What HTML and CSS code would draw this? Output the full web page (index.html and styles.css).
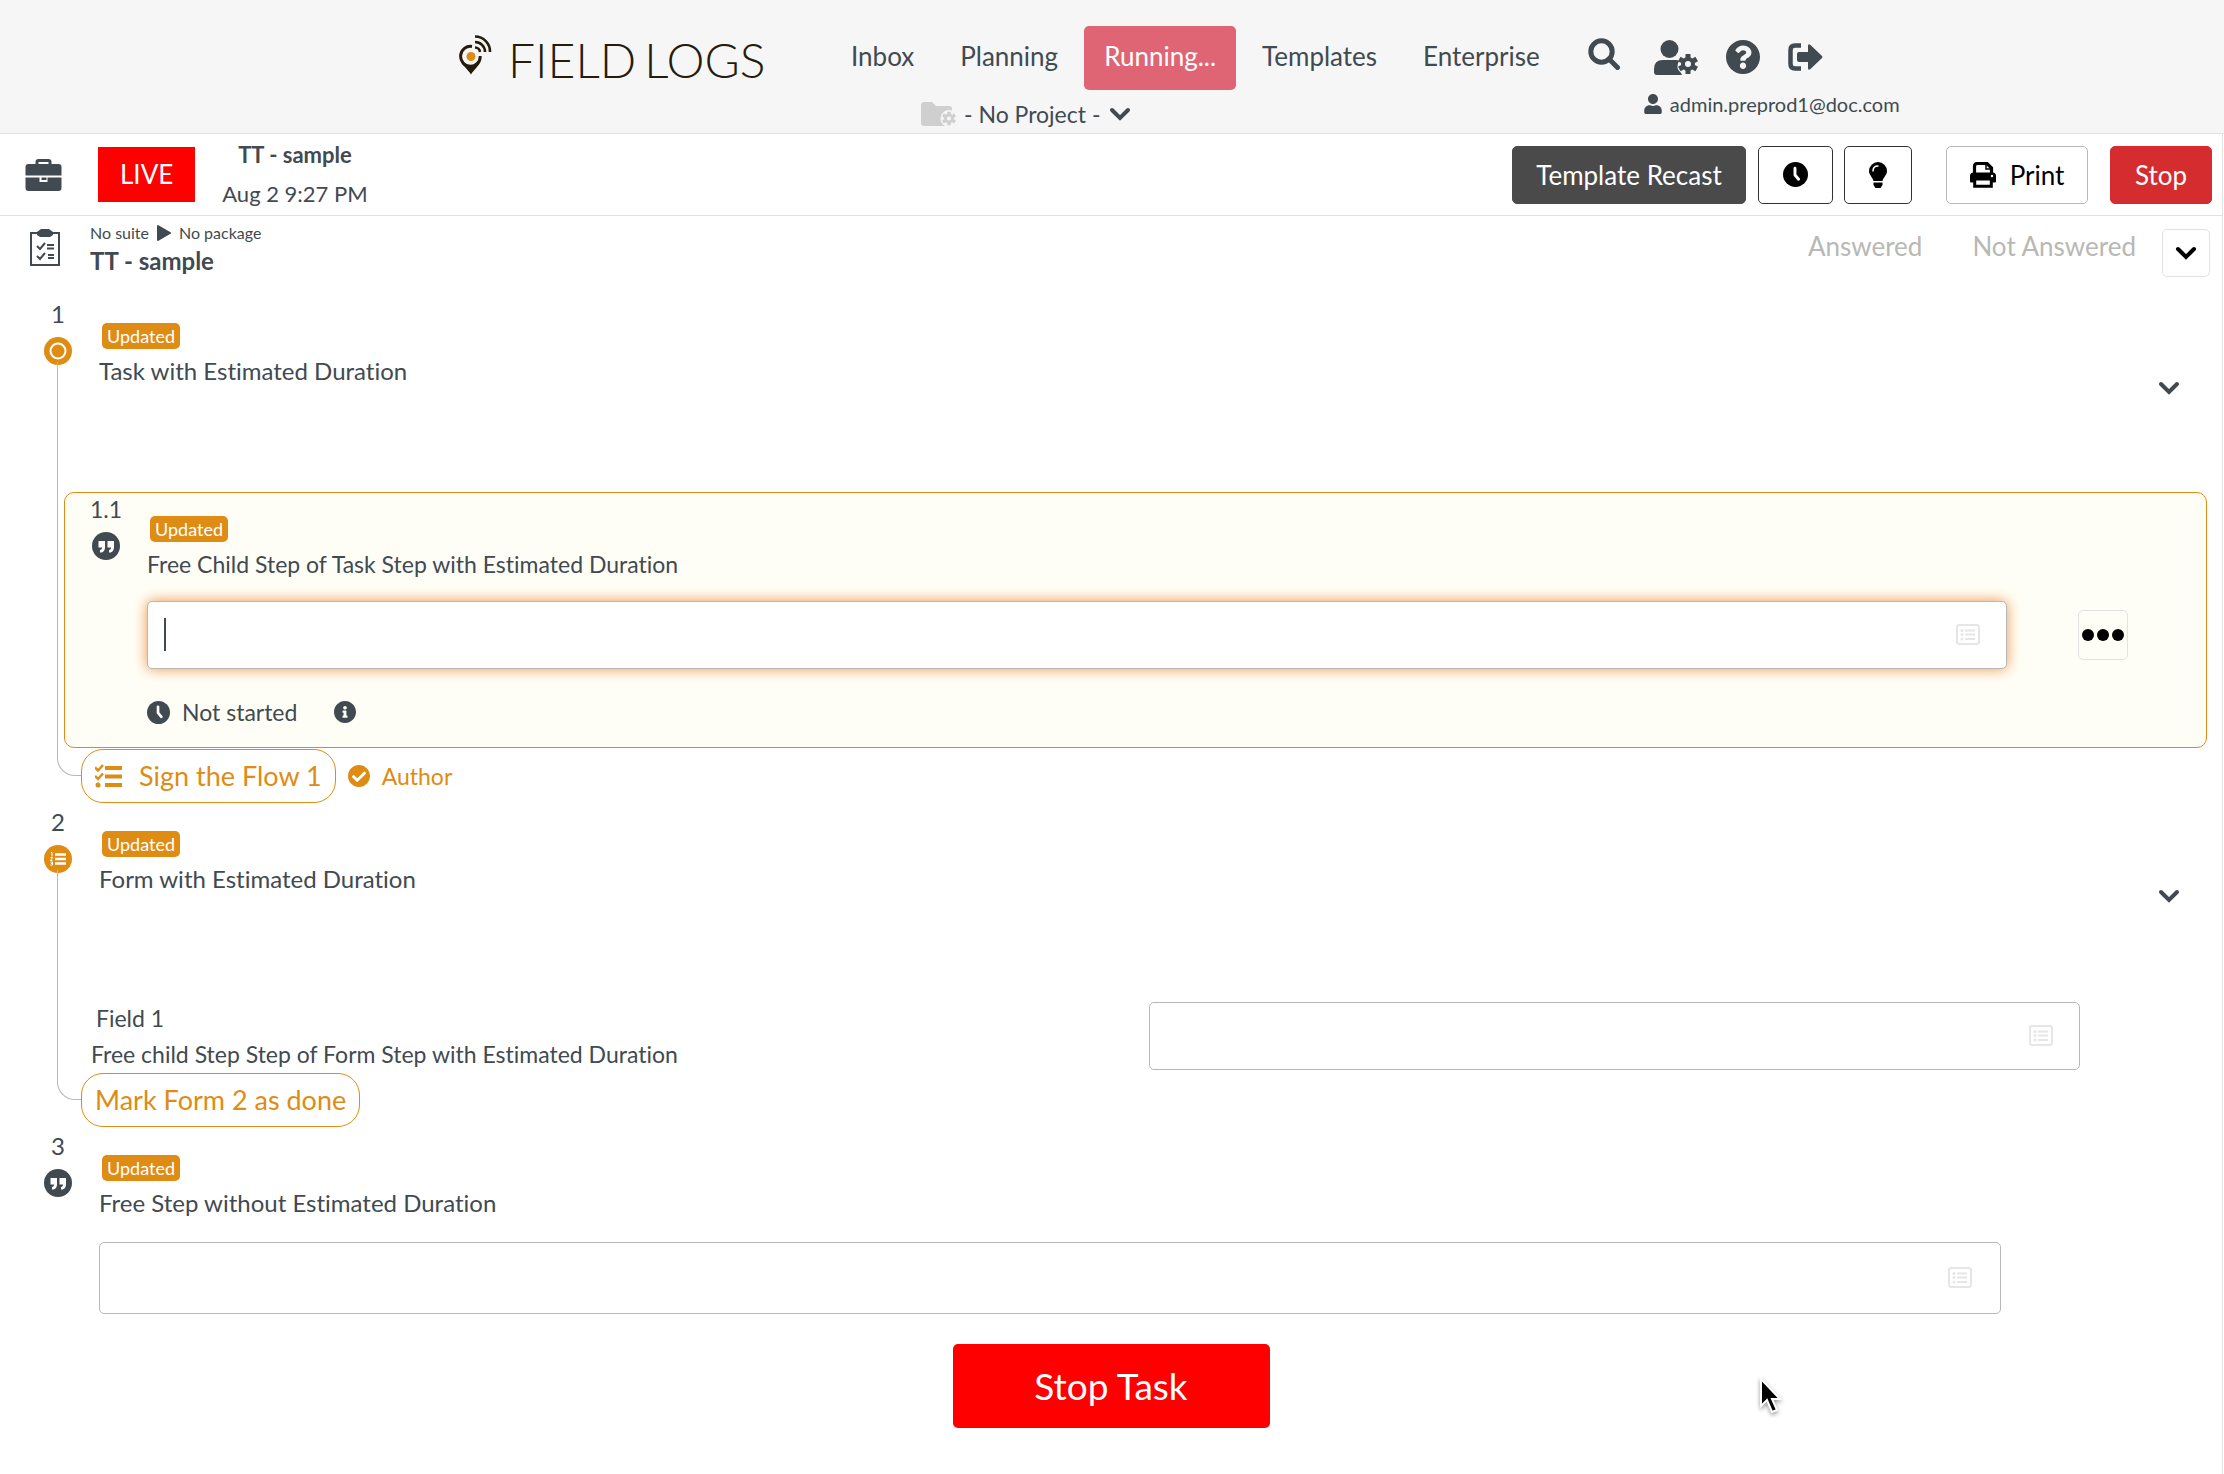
FILE: index.html
```html
<!DOCTYPE html>
<html lang="en">
<head>
<meta charset="utf-8">
<meta name="viewport" content="width=device-width, initial-scale=1">
<title>Field Logs - TT - sample</title>
<link rel="stylesheet" href="styles.css">
</head>
<body>
<svg class="sprite" aria-hidden="true">
  <symbol id="chevron" viewBox="0 0 22 14"><path d="M3 3l8 8 8-8" fill="none" stroke="currentColor" stroke-width="4" stroke-linecap="round"/></symbol>
  <symbol id="gear" viewBox="0 0 20 20"><g fill="none" stroke="currentColor"><circle cx="10" cy="10" r="5" stroke-width="4"/><path d="M10 0v4M10 16v4M1.300 5l3.500 2M15.200 13l3.500 2M1.300 15l3.500-2M15.200 7l3.500-2" stroke-width="5"/></g></symbol>
  <symbol id="user" viewBox="0 0 448 512"><path fill="currentColor" d="M224 256c70.700 0 128-57.300 128-128S294.700 0 224 0 96 57.300 96 128s57.300 128 128 128zm89.600 32h-16.700c-22.200 10.200-46.900 16-72.900 16s-50.600-5.800-72.900-16h-16.700C60.200 288 0 348.200 0 422.400V464c0 26.500 21.500 48 48 48h352c26.500 0 48-21.500 48-48v-41.600c0-74.200-60.200-134.400-134.400-134.400z"/></symbol>
  <symbol id="clock" viewBox="0 0 24 24"><circle cx="12" cy="12" r="12" fill="currentColor"/><path class="knockout" d="M11.500 6v6.500l3.500 4" fill="none" stroke-width="2.800" stroke-linecap="round" stroke-linejoin="round"/></symbol>
  <symbol id="info" viewBox="8 8 496 496"><path fill="currentColor" d="M256 8C119.043 8 8 119.083 8 256c0 136.997 111.043 248 248 248s248-111.003 248-248C504 119.083 392.957 8 256 8zm0 110c23.196 0 42 18.804 42 42s-18.804 42-42 42-42-18.804-42-42 18.804-42 42-42zm56 254c0 6.627-5.373 12-12 12h-88c-6.627 0-12-5.373-12-12v-24c0-6.627 5.373-12 12-12h12v-64h-12c-6.627 0-12-5.373-12-12v-24c0-6.627 5.373-12 12-12h64c6.627 0 12 5.373 12 12v100h12c6.627 0 12 5.373 12 12v24z"/></symbol>
  <symbol id="list" viewBox="0 0 24 21"><rect x="1" y="1" width="22" height="19" rx="2" fill="none" stroke="currentColor" stroke-width="2"/><path d="M9 6.500h10M9 10.500h10M9 15h10" stroke="currentColor" stroke-width="2"/><g fill="currentColor"><circle cx="6" cy="6.500" r="1.500"/><circle cx="6" cy="10.500" r="1.500"/><circle cx="6" cy="15" r="1.500"/></g></symbol>
  <symbol id="quote" viewBox="0 0 28 28"><circle cx="14" cy="14" r="14" fill="currentColor"/><path fill="#fff" d="M6.500 9h6.500v6c0 3.500-1.500 5.500-5 5.500v-2.500c1.500 0 2-1 2-2.500H6.500zM15.500 9H22v6c0 3.500-1.500 5.500-5 5.500v-2.500c1.500 0 2-1 2-2.500h-3.500z"/></symbol>
</svg>

<header class="site-header">
  <a class="logo" href="#" aria-label="Field Logs">
    <svg class="logo-mark" viewBox="0 0 32 40" aria-hidden="true">
      <path d="M12.500 11.500A9.800 10 0 1 0 20.700 21" fill="none" stroke="#251c0e" stroke-width="3"/>
      <path d="M1 25c2 6 8 10 10.500 14.500C14 35 20 31 21.500 25c-3 5-7 6-10 6s-8-1-10.500-6z" fill="#251c0e"/>
      <circle cx="11.500" cy="21.500" r="4.500" fill="#de8c13"/>
      <path d="M15.500 1.500A15 15 0 0 1 30.500 17M15.500 7A10 10 0 0 1 25.500 17M15.500 12.500a5 5 0 0 1 5 4.500" fill="none" stroke="#251c0e" stroke-width="2.600"/>
    </svg>
    <span class="logo-text"><span>FIELD</span><span>LOGS</span></span>
  </a>
  <div class="nav-block">
    <nav class="menu">
      <a href="#">Inbox</a>
      <a href="#">Planning</a>
      <a href="#" class="active">Running...</a>
      <a href="#">Templates</a>
      <a href="#">Enterprise</a>
    </nav>
    <div class="project">
      <svg class="folder" viewBox="0 0 35 24" aria-hidden="true"><path d="M0 3q0-3 3-3h8l4 4h13q3 0 3 3v14q0 3-3 3H3q-3 0-3-3z" fill="#cfcfcf"/><circle cx="28" cy="16.500" r="8.500" fill="#f6f6f6"/><g color="#cfcfcf"><use href="#gear" x="21" y="9.500" width="14" height="14"/></g></svg>
      <select class="project-select" aria-label="Project"><option>- No Project -</option></select>
      <svg class="chevron" aria-hidden="true"><use href="#chevron"/></svg>
    </div>
  </div>
  <div class="account">
    <div class="tools">
      <button class="plain search" aria-label="Search"><svg width="32" height="32" viewBox="0 0 32 32"><g fill="none" stroke="currentColor"><circle cx="13.500" cy="13.500" r="10.700" stroke-width="5"/><path d="M21 21l8.500 8.500" stroke-width="5" stroke-linecap="round"/></g></svg></button>
      <button class="plain" aria-label="User settings"><svg width="44" height="35" viewBox="0 0 44 35"><g fill="currentColor"><circle cx="15.500" cy="9" r="9"/><path d="M9 20h13q2 0 3 1-4 7 2 12l1 2H3q-3 0-3-3v-3q0-9 9-9z"/></g><use href="#gear" x="24" y="14" width="20" height="20"/></svg></button>
      <button class="plain" aria-label="Help"><svg width="34" height="34" viewBox="8 8 496 496"><path fill="currentColor" d="M504 256c0 136.997-111.043 248-248 248S8 392.997 8 256C8 119.083 119.043 8 256 8s248 111.083 248 248zM262.655 90c-54.497 0-89.255 22.957-116.549 63.758-3.536 5.286-2.353 12.415 2.715 16.258l34.699 26.310c5.205 3.947 12.621 3.008 16.665-2.122 17.864-22.658 30.113-35.797 57.303-35.797 20.429 0 45.698 13.148 45.698 32.958 0 14.976-12.363 22.667-32.534 33.976C247.128 238.528 216 254.941 216 296v4c0 6.627 5.373 12 12 12h56c6.627 0 12-5.373 12-12v-1.333c0-28.462 83.186-29.647 83.186-106.667 0-58.002-60.165-102-116.531-102zM256 338c-25.365 0-46 20.635-46 46 0 25.364 20.635 46 46 46s46-20.636 46-46c0-25.365-20.635-46-46-46z"/></svg></button>
      <button class="plain" aria-label="Sign out"><svg width="35" height="28" viewBox="0 0 35 28"><path d="M13 2.500H7Q2.500 2.500 2.500 7v14q0 4.500 4.500 4.500h6" fill="none" stroke="currentColor" stroke-width="4.500"/><path fill="currentColor" d="M11 9h9V3q0-3 2.500-1l11.500 11q1 1 0 2L22.500 26q-2.500 2-2.500-1v-6h-9q-2 0-2-2v-6q0-2 2-2z"/></svg></button>
    </div>
    <div class="email"><svg width="18" height="20" aria-hidden="true"><use href="#user"/></svg><span>admin.preprod1@doc.com</span></div>
  </div>
</header>

<main class="page">
  <div class="task-bar">
    <svg class="briefcase" viewBox="0 0 36 32" aria-hidden="true"><path d="M11.500 6V3q0-1.500 1.500-1.500h10q1.500 0 1.500 1.500v3" fill="none" stroke="currentColor" stroke-width="3"/><path fill="currentColor" d="M3 5h30q3 0 3 3v8.500H0V8q0-3 3-3zM0 18.500h14V23h8v-4.500h14V29q0 3-3 3H3q-3 0-3-3zM16 18.500h5V21h-5z"/></svg>
    <span class="live">LIVE</span>
    <div class="task-info"><strong>TT - sample</strong><span>Aug 2 9:27 PM</span></div>
    <div class="actions">
      <button class="btn btn-dark">Template Recast</button>
      <button class="btn btn-clock" aria-label="Time"><svg width="25" height="25"><use href="#clock"/></svg></button>
      <button class="btn btn-bulb" aria-label="Hint"><svg width="18" height="26" viewBox="0 0 18 26"><path fill="currentColor" d="M9 0a9 9 0 0 1 9 9c0 4-3.500 6-4.500 10h-9C3.500 15 0 13 0 9a9 9 0 0 1 9-9zM4.500 20.500h9V23l-2 3h-5l-2-3z"/><path d="M4 9q0-5 5-5" fill="none" stroke="#fff" stroke-width="1.500" stroke-linecap="round"/></svg></button>
      <button class="btn btn-print"><svg width="26" height="26" viewBox="0 0 26 26"><path d="M4.500 12V4.500q0-3 3-3h9.500L21.500 6v6" fill="none" stroke="currentColor" stroke-width="3.200"/><path d="M16 2v5h5" fill="none" stroke="currentColor" stroke-width="1.500"/><path fill="currentColor" d="M3.500 10.500h19q3.500 0 3.500 3.500v5.500q0 1-1 1h-3V17H4v3.500H1q-1 0-1-1V14q0-3.500 3.500-3.500z"/><path d="M4.700 17h16.600v7.300H4.700z" fill="#fff" stroke="currentColor" stroke-width="3"/><circle cx="22" cy="14" r="1.200" fill="#fff"/></svg>Print</button>
      <button class="btn btn-stop">Stop</button>
    </div>
  </div>

  <div class="template-bar">
    <svg class="clipboard" viewBox="0 0 32 38" aria-hidden="true"><path d="M2 4h28v32H2z" fill="none" stroke="currentColor" stroke-width="2"/><path d="M8 3l4-3h8l4 3v3l-3 2H11L8 6zM18 15h7v2h-7zM18 18.500h7v2h-7zM19 25h6v2h-6zM19 28h6v2h-6z" fill="currentColor"/><path d="M8 17l3 3 5-6M8 27l3 3 5-6" fill="none" stroke="currentColor" stroke-width="2"/></svg>
    <div class="template-info">
      <div class="crumbs"><span>No suite</span><svg width="14" height="16" viewBox="0 0 14 16" aria-hidden="true"><path d="M1 1l12 7-12 7z" fill="currentColor" stroke="currentColor" stroke-width="2" stroke-linejoin="round"/></svg><span>No package</span></div>
      <h1>TT - sample</h1>
    </div>
    <div class="filters">
      <span>Answered</span>
      <span>Not Answered</span>
      <button class="square" aria-label="Expand"><svg class="chevron"><use href="#chevron"/></svg></button>
    </div>
  </div>

  <section class="step railed">
    <div class="step-head">
      <div class="marker"><span>1</span><svg width="28" height="28" viewBox="0 0 28 28"><circle cx="14" cy="14" r="14" fill="#de8c13"/><circle cx="14" cy="14" r="7.500" fill="none" stroke="#fff" stroke-width="2"/></svg></div>
      <div class="step-title"><span class="badge">Updated</span><h2>Task with Estimated Duration</h2></div>
      <button class="plain toggle" aria-label="Collapse step"><svg class="chevron"><use href="#chevron"/></svg></button>
    </div>
    <div class="child">
      <div class="marker"><span>1.1</span><svg width="28" height="28"><use href="#quote"/></svg></div>
      <div class="child-body">
        <div class="step-title"><span class="badge">Updated</span><h2><label for="answer-1-1">Free Child Step of Task Step with Estimated Duration</label></h2></div>
        <div class="answer-row">
          <div class="field focused"><input id="answer-1-1" type="text"><span class="caret"></span><svg class="list"><use href="#list"/></svg></div>
          <button class="square more" aria-label="More"><svg width="42" height="12" viewBox="0 0 42 12"><circle cx="6" cy="6" r="6"/><circle cx="21" cy="6" r="6"/><circle cx="36" cy="6" r="6"/></svg></button>
        </div>
        <div class="status"><svg width="23" height="23"><use href="#clock"/></svg><span>Not started</span><svg class="info" width="22" height="22"><use href="#info"/></svg></div>
      </div>
    </div>
    <div class="finish">
      <button class="pill"><svg width="28" height="24" viewBox="0 0 28 24"><path d="M10 4h17M10 12.500h17M10 21h17" stroke="currentColor" stroke-width="4"/><path d="M0 3.500l3 3L8 1M0 12l3 3 5-5.500" fill="none" stroke="currentColor" stroke-width="2.500"/><circle cx="3" cy="21" r="2.500" fill="currentColor"/></svg>Sign the Flow 1</button>
      <span class="author"><svg width="22" height="22" viewBox="8 8 496 496"><path fill="currentColor" d="M504 256c0 136.967-111.033 248-248 248S8 392.967 8 256 119.033 8 256 8s248 111.033 248 248zM227.314 387.314l184-184c6.248-6.248 6.248-16.379 0-22.627l-22.627-22.627c-6.248-6.249-16.379-6.249-22.628 0L216 308.118l-70.059-70.059c-6.248-6.248-16.379-6.248-22.628 0l-22.627 22.627c-6.248 6.248-6.248 16.379 0 22.627l104 104c6.249 6.249 16.379 6.249 22.628.001z"/></svg>Author</span>
    </div>
  </section>

  <section class="step railed">
    <div class="step-head">
      <div class="marker"><span>2</span><svg width="28" height="28" viewBox="0 0 28 28"><circle cx="14" cy="14" r="14" fill="#de8c13"/><path d="M11 9.500h11M11 14h11M11 18.500h11" stroke="#fff" stroke-width="2.500"/><path d="M7 7.500h1v4M6.500 12.500h2l-2 3h2M6.500 17h2v3h-2M7 18.500h1.500" fill="none" stroke="#fff"/></svg></div>
      <div class="step-title"><span class="badge">Updated</span><h2>Form with Estimated Duration</h2></div>
      <button class="plain toggle" aria-label="Collapse step"><svg class="chevron"><use href="#chevron"/></svg></button>
    </div>
    <div class="form-row">
      <label class="form-label" for="answer-2-1"><span class="form-name">Field 1</span><span>Free child Step Step of Form Step with Estimated Duration</span></label>
      <div class="field"><input id="answer-2-1" type="text"><svg class="list"><use href="#list"/></svg></div>
    </div>
    <div class="finish"><button class="pill">Mark Form 2 as done</button></div>
  </section>

  <section class="step">
    <div class="step-head short">
      <div class="marker"><span>3</span><svg width="28" height="28"><use href="#quote"/></svg></div>
      <div class="step-title"><span class="badge">Updated</span><h2><label for="answer-3">Free Step without Estimated Duration</label></h2></div>
    </div>
    <div class="field tall"><input id="answer-3" type="text"><svg class="list"><use href="#list"/></svg></div>
  </section>

  <button class="stop-task">Stop Task</button>
</main>
<svg class="pointer" width="26" height="40" viewBox="0 0 26 40" aria-hidden="true"><path d="M3 3v27l6-6 5 12 5-2-5-11h8z" fill="#000" stroke="#fff" stroke-width="2"/></svg>
</body>
</html>
```

FILE: styles.css
```css
* { box-sizing: border-box; }

body {
  margin: 0;
  min-height: 100vh;
  position: relative;
  display: flex;
  flex-direction: column;
  font-family: Lato, "Open Sans", sans-serif;
  font-size: 24px;
  line-height: 28px;
  font-variant-ligatures: none;
  color: #414a51;
  background: #fff;
}

button, input, select { font: inherit; color: inherit; }
button { cursor: pointer; }
svg { display: block; flex: none; }
h1, h2 { margin: 0; font-size: 24px; line-height: 28px; }
h2 { font-weight: 400; }

.sprite { position: absolute; width: 0; height: 0; }
.chevron { width: 22px; height: 14px; }
.knockout { stroke: #fff; }
.plain { border: 0; padding: 0; background: none; }

/* Site header */
.site-header {
  display: flex;
  align-items: flex-start;
  height: 134px;
  padding-left: calc(50% - 653px);
  background: #f6f6f6;
  border-bottom: 1px solid #e2e2e2;
}
.logo {
  display: flex;
  align-items: center;
  gap: 16px;
  width: 372px;
  padding-top: 30px;
  color: #251c0e;
  text-decoration: none;
}
.logo-mark { width: 33px; height: 40px; margin-bottom: 10px; }
.logo-text { display: flex; gap: 8px; font-size: 48px; line-height: 60px; font-weight: 300; }
.nav-block { padding-top: 26px; }
.menu { display: flex; gap: 6px; font-size: 26px; }
.menu a {
  padding: 16px 20px 20px;
  border-radius: 5px;
  color: inherit;
  text-decoration: none;
}
.menu .active { background: #df6575; color: #fff; }
.project { display: flex; align-items: center; gap: 8px; padding: 10px 0 0 90px; font-size: 23px; }
.folder { width: 35px; height: 24px; }
.project-select { appearance: none; border: 0; padding: 0; background: none; }
.account { padding: 38px 0 0 28px; }
.tools { display: flex; align-items: center; gap: 28px; height: 38px; }
.search { margin: 0 6px 6px 0; }
.email { display: flex; align-items: center; gap: 8px; padding: 14px 0 0 56px; font-size: 20px; }

/* Task bar */
.page {
  flex: 1;
  margin-right: 1px;
  border-right: 1px solid #e2e2e2;
}
.task-bar {
  display: flex;
  align-items: center;
  height: 82px;
  padding: 0 10px 0 25px;
  border-bottom: 1px solid #e2e2e2;
}
.briefcase { width: 37px; height: 32px; }
.live {
  margin-left: 36px;
  padding: 13px 22px 14px;
  background: #f00;
  color: #fff;
  font-size: 26px;
}
.task-info {
  display: flex;
  flex-direction: column;
  align-items: center;
  gap: 11px;
  margin-left: 27px;
  font-size: 22px;
}
.task-info strong, h1 { font-weight: 700; }
.actions { display: flex; margin-left: auto; font-size: 26px; }
.btn {
  display: flex;
  align-items: center;
  justify-content: center;
  height: 58px;
  padding: 0 20px;
  border: 1px solid #333;
  border-radius: 5px;
  background: #fff;
  color: #000;
}
.btn-dark { width: 234px; background: #4a4a4a; border-color: #4a4a4a; color: #fff; }
.btn-clock { width: 75px; margin-left: 12px; }
.btn-bulb { width: 68px; margin-left: 11px; }
.btn-print { width: 142px; margin-left: 34px; gap: 14px; border-color: #b8b8b8; }
.btn-stop { width: 102px; margin-left: 22px; background: #d52d2f; border-color: #d52d2f; color: #fff; }

/* Template bar */
.template-bar { display: flex; align-items: flex-start; height: 84px; padding: 3px 12px 0 29px; }
.clipboard { width: 32px; height: 38px; margin-top: 10px; }
.template-info { padding-left: 29px; }
.crumbs { display: flex; align-items: center; gap: 8px; font-size: 16px; }
.filters { display: flex; gap: 50px; margin-left: auto; padding-top: 13px; color: #b8b8b4; font-size: 26px; }
.square {
  display: flex;
  align-items: center;
  justify-content: center;
  width: 48px;
  height: 48px;
  padding: 0;
  border: 1px solid #e2e2e2;
  border-radius: 5px;
  background: none;
  color: #000;
}
.filters .square { margin: -3px 0 0 -24px; }

/* Steps */
.step { position: relative; padding-bottom: 5px; }
.railed::before {
  content: "";
  position: absolute;
  left: 57px;
  top: 62px;
  bottom: 32px;
  width: 24px;
  border: solid #b8b8b8;
  border-width: 0 0 1px 1px;
  border-bottom-left-radius: 18px;
}
.step-head { display: flex; align-items: flex-start; min-height: 176px; padding: 0 42px 0 30px; margin-bottom: 16px; }
.step-head.short { min-height: 94px; }
.marker { display: flex; flex-direction: column; align-items: center; gap: 9px; width: 56px; }
.step-title {
  display: flex;
  flex-direction: column;
  align-items: flex-start;
  gap: 8px;
  padding: 23px 0 0 13px;
}
.badge {
  margin-left: 3px;
  padding: 0 5px;
  border-radius: 5px;
  background: #de8c13;
  color: #fff;
  font-size: 18px;
  line-height: 26px;
}
.toggle { align-self: center; margin-left: auto; }

.child {
  position: relative;
  display: flex;
  margin: 0 15px 0 64px;
  padding: 2px 78px 21px 13px;
  border: 1px solid #de8c13;
  border-radius: 10px;
  background: #fffef6;
  font-size: 23px;
}
.child-body { flex: 1; }
.child .step-title { padding-top: 21px; }
.child h2 { font-size: 23px; }
.answer-row { display: flex; align-items: center; gap: 71px; padding: 23px 0 29px 13px; }
.answer-row .field { flex: 1; }
.more { width: 50px; height: 50px; }
.status { display: flex; align-items: center; gap: 12px; padding-left: 13px; }
.status .info { margin-left: 25px; }
.status .knockout { stroke: #fffef6; }

.field { position: relative; height: 68px; }
.field input {
  display: block;
  width: 100%;
  height: 100%;
  padding: 0 80px 0 16px;
  border: 1px solid #b8b8b8;
  border-radius: 5px;
  background: #fff;
  outline: 0;
}
.field .list { position: absolute; right: 27px; top: 23px; width: 24px; height: 21px; color: #e6e6e6; }
.focused input { box-shadow: 0 0 14px #e8964a; }
.caret { position: absolute; left: 17px; top: 17px; width: 2px; height: 33px; background: #414a51; }

.finish { display: flex; align-items: center; gap: 12px; padding: 1px 0 0 81px; }
.pill {
  position: relative;
  display: flex;
  align-items: center;
  gap: 16px;
  height: 54px;
  padding: 0 13px;
  border: 1px solid #de8c13;
  border-radius: 22px;
  background: #fff;
  color: #de8c13;
  font-size: 27px;
}
.author { display: flex; align-items: center; gap: 12px; color: #de8c13; font-size: 23px; }

.form-row {
  display: grid;
  grid-template-columns: 1058px 1fr;
  padding: 2px 142px 2px 91px;
  font-size: 23px;
}
.form-label { display: flex; flex-direction: column; gap: 8px; padding-top: 2px; }
.form-name { padding-left: 5px; }
.tall { height: 72px; margin: 0 221px 0 99px; }
.tall .list { right: 29px; top: 25px; }

.stop-task {
  display: block;
  height: 84px;
  min-width: 317px;
  margin: 25px auto 46px;
  border: 0;
  border-radius: 5px;
  background: #f00;
  color: #fff;
  font-size: 37px;
}
.pointer { position: absolute; left: 1758px; top: 1376px; filter: drop-shadow(0 2px 2px #0006); }
```
